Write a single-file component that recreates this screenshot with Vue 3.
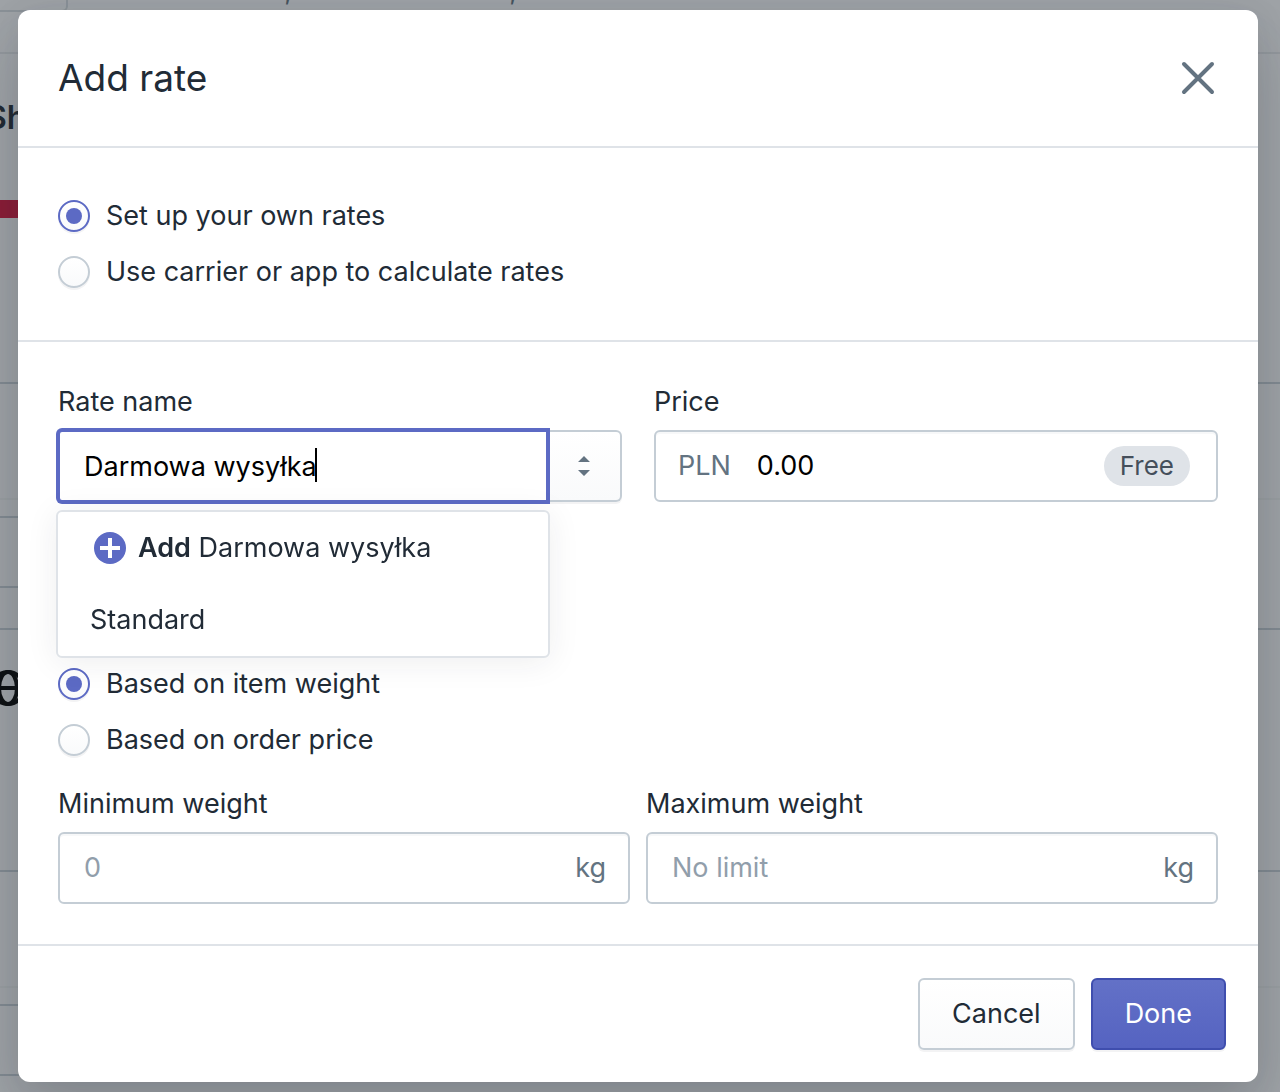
<script setup>
import { ref, computed, onMounted } from "vue";

const source = ref("own");
const basis = ref("weight");
const rateName = ref("Darmowa wysyłka");
const price = ref("0.00");
const minWeight = ref("");
const maxWeight = ref("");

const nameInput = ref(null);
const textWidth = ref(0);

const caretStyle = computed(() => ({ left: 24 + textWidth.value + "px" }));

// the caret follows the end of the typed text
function measure() {
  const ctx = document.createElement("canvas").getContext("2d");
  ctx.font = getComputedStyle(nameInput.value).font;
  textWidth.value = Math.round(ctx.measureText(rateName.value).width);
}

onMounted(() => {
  nameInput.value.focus();
  measure();
});
</script>

<template>
  <div class="shell">
    <div class="page" aria-hidden="true">
      <div class="page-top">
        <div class="page-box"></div>
        <div class="page-address">Lwowska 120, 35-310 Rzeszow, Poland</div>
      </div>
      <div class="page-title">Shipping</div>
      <div class="page-bar"></div>
      <div class="page-card">
        <div class="page-head"></div>
        <div class="page-foot"><div class="page-btn"></div></div>
      </div>
      <div class="page-card">
        <div class="page-zone">
          <svg width="40" height="40" viewBox="0 0 40 40" fill="none" stroke="#000" stroke-width="4">
            <circle cx="20" cy="20" r="16" />
            <ellipse cx="20" cy="20" rx="9" ry="16" />
            <path d="M4 20h32" />
          </svg>
        </div>
      </div>
      <div class="page-card">
        <div class="page-head"></div>
        <div class="page-foot"><div class="page-btn"></div></div>
      </div>
    </div>

    <div class="overlay">
      <div class="modal" role="dialog" aria-labelledby="modal-title">
        <header class="header">
          <h2 id="modal-title">Add rate</h2>
          <button class="close" type="button" aria-label="Close">
            <svg width="40" height="40" viewBox="0 0 40 40" fill="none" stroke="#637381" stroke-width="4" stroke-linecap="round">
              <path d="M6 6l28 28M34 6L6 34" />
            </svg>
          </button>
        </header>

        <section class="section">
          <label class="choice">
            <input v-model="source" type="radio" name="source" value="own" />
            <span>Set up your own rates</span>
          </label>
          <label class="choice">
            <input v-model="source" type="radio" name="source" value="carrier" />
            <span>Use carrier or app to calculate rates</span>
          </label>
        </section>

        <section class="section">
          <div class="grid wide">
            <div>
              <label class="label" for="rate-name">Rate name</label>
              <div class="combo">
                <div class="combo-main">
                  <input id="rate-name" ref="nameInput" v-model="rateName" class="combo-input" type="text" autocomplete="off" @input="measure" />
                  <span class="caret" :style="caretStyle"></span>
                  <ul class="menu">
                    <li>
                      <button class="option" type="button">
                        <svg class="plus" width="32" height="32" viewBox="0 0 32 32">
                          <circle cx="16" cy="16" r="16" fill="#5c6ac4" />
                          <path d="M16 6v20M6 16h20" stroke="#fff" stroke-width="4" />
                        </svg>
                        <span><b>Add</b> {{ rateName }}</span>
                      </button>
                    </li>
                    <li><button class="option" type="button">Standard</button></li>
                  </ul>
                </div>
                <button class="combo-toggle" type="button" aria-label="Show rate names">
                  <svg width="12" height="20" viewBox="0 0 12 20" fill="#637381">
                    <path d="M6 0l6 6H0zM6 20l6-6H0z" />
                  </svg>
                </button>
              </div>
            </div>
            <div>
              <label class="label" for="price">Price</label>
              <div class="field">
                <span class="prefix">PLN</span>
                <input id="price" v-model="price" class="value" type="text" />
                <span class="badge">Free</span>
              </div>
            </div>
          </div>

          <div class="conditions">
            <label class="choice">
              <input v-model="basis" type="radio" name="basis" value="weight" />
              <span>Based on item weight</span>
            </label>
            <label class="choice">
              <input v-model="basis" type="radio" name="basis" value="price" />
              <span>Based on order price</span>
            </label>
          </div>

          <div class="grid">
            <div>
              <label class="label" for="min-weight">Minimum weight</label>
              <div class="field">
                <input id="min-weight" v-model="minWeight" type="text" placeholder="0" />
                <span class="unit">kg</span>
              </div>
            </div>
            <div>
              <label class="label" for="max-weight">Maximum weight</label>
              <div class="field">
                <input id="max-weight" v-model="maxWeight" type="text" placeholder="No limit" />
                <span class="unit">kg</span>
              </div>
            </div>
          </div>
        </section>

        <footer class="footer">
          <button class="btn" type="button">Cancel</button>
          <button class="btn primary" type="button">Done</button>
        </footer>
      </div>
    </div>
  </div>
</template>

<style>
body {
  background: #f4f6f8;
}
</style>

<style scoped>
* {
  box-sizing: border-box;
}

.shell {
  position: relative;
  min-height: 100vh;
  overflow: hidden;
  color: #212b36;
  font-family: Inter, "Noto Sans", sans-serif;
  font-size: 27px;
  line-height: 40px;
}

button,
input {
  font: inherit;
  color: inherit;
}

/* page behind the dialog */
.page {
  position: absolute;
  inset: 0;
  overflow: hidden;
  background: #f4f6f8;
}

.page-top {
  display: flex;
  gap: 46px;
  height: 54px;
  border-bottom: 2px solid #dfe3e8;
}

.page-box {
  width: 68px;
  height: 12px;
  border: solid #d3d9df;
  border-width: 0 2px 2px 0;
  border-bottom-right-radius: 6px;
}

.page-address {
  margin-top: -29px;
  color: #637381;
}

.page-title {
  height: 146px;
  padding-top: 44px;
  margin-left: -14px;
  font-size: 32px;
  font-weight: 600;
}

.page-bar {
  width: 50%;
  height: 18px;
  margin-bottom: 164px;
  background: #d2143c;
}

.page-card {
  height: 246px;
  border-top: 2px solid #c4cdd5;
}

.page-card + .page-card {
  height: 242px;
}

.page-head {
  height: 116px;
  border-bottom: 2px solid #ebeef0;
}

.page-foot {
  padding-top: 16px;
}

.page-btn {
  width: 160px;
  height: 72px;
  border: solid #c4cdd5;
  border-width: 2px 0;
}

.page-zone {
  margin-left: -12px;
  padding-top: 38px;
}

/* dialog */
.overlay {
  position: relative;
  min-height: 100vh;
  padding: 10px 22px 10px 18px;
  background: rgba(33, 40, 44, 0.4);
}

.modal {
  background: #fff;
  border-radius: 12px;
  box-shadow: 0 32px 64px rgba(33, 43, 54, 0.2), 0 4px 32px rgba(33, 43, 54, 0.08);
}

.header {
  display: flex;
  align-items: center;
  justify-content: space-between;
  padding: 48px 40px;
  border-bottom: 2px solid #dfe3e8;
}

h2 {
  margin: 0;
  font-size: 37px;
  font-weight: 400;
}

.close {
  display: flex;
  padding: 0;
  border: 0;
  background: none;
  cursor: pointer;
}

.section {
  padding: 40px;
  border-bottom: 2px solid #dfe3e8;
}

.choice {
  display: flex;
  align-items: center;
  gap: 16px;
  width: fit-content;
  height: 56px;
}

.choice input {
  appearance: none;
  display: grid;
  place-items: center;
  width: 32px;
  height: 32px;
  margin: 0;
  border: 2px solid #c4cdd5;
  border-radius: 50%;
  background: linear-gradient(#fff, #f9fafb);
  box-shadow: 0 2px 0 rgba(22, 29, 37, 0.05);
}

.choice input:checked {
  border-color: #5c6ac4;
}

.choice input:checked::before {
  content: "";
  width: 16px;
  height: 16px;
  border-radius: 50%;
  background: #5c6ac4;
}

.grid {
  display: grid;
  grid-template-columns: repeat(2, minmax(0, 1fr));
  gap: 16px;
}

.wide {
  gap: 32px;
}

.conditions {
  margin: 154px 0 16px;
}

.label {
  display: block;
  margin-bottom: 8px;
}

.field {
  display: flex;
  align-items: center;
  height: 72px;
  padding: 0 22px;
  border: 2px solid #c4cdd5;
  border-radius: 6px;
  box-shadow: inset 0 2px 0 rgba(99, 115, 129, 0.05);
}

.field input {
  flex: 1;
  min-width: 0;
  padding: 0 2px;
  border: 0;
  outline: 0;
  background: none;
  color: #000;
}

.field input::placeholder {
  color: #919eab;
  opacity: 1;
}

.prefix,
.unit {
  color: #637381;
}

.field .value {
  padding-left: 26px;
}

.badge {
  margin-right: 4px;
  padding: 0 16px;
  border-radius: 20px;
  background: #dfe3e8;
  color: #454f5b;
  font-size: 26px;
}

.combo {
  display: flex;
  height: 72px;
}

.combo-main {
  position: relative;
  flex: 1;
  min-width: 0;
}

.combo-input {
  width: 100%;
  height: 72px;
  padding: 0 24px;
  border: 2px solid #5c6ac4;
  border-radius: 4px 0 0 4px;
  outline: 0;
  background: #fff;
  box-shadow: 0 0 0 2px #5c6ac4;
  color: #000;
  caret-color: transparent;
}

.caret {
  position: absolute;
  top: 18px;
  width: 2px;
  height: 34px;
  background: #000;
}

.combo-toggle {
  display: grid;
  place-items: center;
  width: 74px;
  padding: 0;
  border: 2px solid #c4cdd5;
  border-left: 0;
  border-radius: 0 6px 6px 0;
  background: linear-gradient(#fff, #f9fafb);
  box-shadow: 0 2px 0 rgba(22, 29, 37, 0.05);
}

.menu {
  position: absolute;
  top: 80px;
  left: -2px;
  right: -2px;
  margin: 0;
  padding: 0;
  border: 2px solid #dfe3e8;
  border-radius: 6px;
  background: #fff;
  box-shadow: 0 4px 32px rgba(33, 43, 54, 0.08);
  list-style: none;
}

.option {
  display: flex;
  align-items: center;
  width: 100%;
  height: 72px;
  padding: 0 32px;
  border: 0;
  background: none;
  text-align: left;
}

.option b {
  font-weight: 600;
}

.plus {
  flex: none;
  margin: 0 12px 0 4px;
}

.footer {
  display: flex;
  justify-content: flex-end;
  gap: 16px;
  padding: 32px;
}

.btn {
  height: 72px;
  padding: 0 32px;
  border: 2px solid #c4cdd5;
  border-radius: 6px;
  background: linear-gradient(#fff, #f9fafb);
  box-shadow: 0 2px 0 rgba(22, 29, 37, 0.05);
  cursor: pointer;
}

.primary {
  border-color: #3f4eae;
  background: linear-gradient(#6371c7, #5563c1);
  color: #fff;
}
</style>
